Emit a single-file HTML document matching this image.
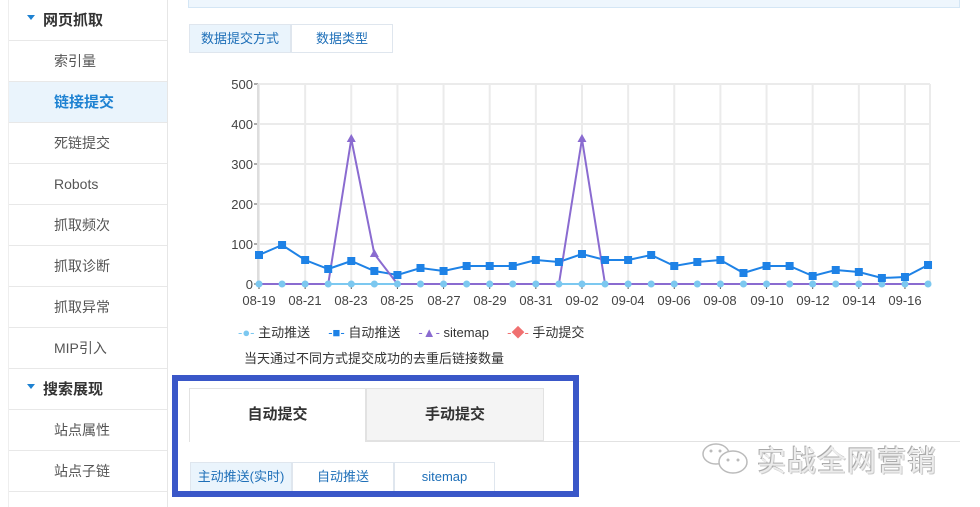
<!DOCTYPE html>
<html><head><meta charset="utf-8"><style>
*{margin:0;padding:0;box-sizing:border-box}
body{width:980px;height:507px;overflow:hidden;background:#fff;font-family:"Liberation Sans","Noto Sans CJK SC",sans-serif;position:relative;color:#333}
.side{position:absolute;left:8px;top:0;width:160px;height:507px;border-right:1px solid #e6e6e6;border-left:1px solid #eee}
.row{height:41px;border-bottom:1px solid #e8e8e8;font-size:14px;line-height:41px;padding-left:45px;color:#555}
.row.h{padding-left:18px;font-weight:bold;color:#333;font-size:15px}
.row.h:before{content:"";display:inline-block;border:4px solid transparent;border-top:5px solid #1e82d2;margin-right:8px;vertical-align:1px}
.row.a{background:#eaf4fc;color:#1e82d2;font-weight:bold;font-size:15px}
.abs{position:absolute}
.tab{position:absolute;font-size:13px;text-align:center;border:1px solid #dfe6ee;color:#1e6fb8}
</style></head><body>
<div class="side">
<div class="row h">网页抓取</div>
<div class="row">索引量</div>
<div class="row a">链接提交</div>
<div class="row">死链提交</div>
<div class="row">Robots</div>
<div class="row">抓取频次</div>
<div class="row">抓取诊断</div>
<div class="row">抓取异常</div>
<div class="row">MIP引入</div>
<div class="row h">搜索展现</div>
<div class="row">站点属性</div>
<div class="row">站点子链</div>
</div>
<div class="abs" style="left:188px;top:-1px;width:772px;height:9px;background:#eef6fd;border:1px solid #d4e6f5"></div>
<div class="tab" style="left:189px;top:24px;width:102px;height:29px;line-height:27px;background:#eaf4fc">数据提交方式</div>
<div class="tab" style="left:291px;top:24px;width:102px;height:29px;line-height:27px;background:#fff">数据类型</div>
<svg class="abs" style="left:0;top:0" width="980" height="507" id="c">
<g font-size="13" fill="#444" text-anchor="end" font-family="Liberation Sans,sans-serif">
<text x="253" y="89">500</text><text x="253" y="129">400</text><text x="253" y="169">300</text><text x="253" y="209">200</text><text x="253" y="249">100</text><text x="253" y="289">0</text>
</g>
<g font-size="13" fill="#444" text-anchor="middle" font-family="Liberation Sans,sans-serif" id="xl">
<text x="259" y="305">08-19</text><text x="305" y="305">08-21</text><text x="351" y="305">08-23</text><text x="397" y="305">08-25</text><text x="444" y="305">08-27</text><text x="490" y="305">08-29</text><text x="536" y="305">08-31</text><text x="582" y="305">09-02</text><text x="628" y="305">09-04</text><text x="674" y="305">09-06</text><text x="720" y="305">09-08</text><text x="767" y="305">09-10</text><text x="813" y="305">09-12</text><text x="859" y="305">09-14</text><text x="905" y="305">09-16</text>
</g>
</svg>
<div class="abs" style="left:238px;top:322px;font-size:13px;color:#333;white-space:nowrap">
<span style="color:#7cc8f0">-●-</span> 主动推送 &nbsp;&nbsp;&nbsp; <span style="color:#1e82e6">-■-</span> 自动推送 &nbsp;&nbsp;&nbsp; <span style="color:#8a6bd0">-▲-</span> sitemap &nbsp;&nbsp;&nbsp; <span style="color:#f07070">-◆-</span> 手动提交</div>
<div class="abs" style="left:244px;top:348px;font-size:13px;color:#333">当天通过不同方式提交成功的去重后链接数量</div>
<div class="abs" style="left:366px;top:441px;width:594px;height:1px;background:#e2e2e2"></div>
<div class="abs" style="left:189px;top:388px;width:177px;height:54px;background:#fff;border:1px solid #e2e2e2;border-bottom:none;font-size:15px;font-weight:bold;text-align:center;line-height:52px">自动提交</div>
<div class="abs" style="left:366px;top:388px;width:178px;height:53px;background:#f4f4f4;border:1px solid #e2e2e2;font-size:15px;font-weight:bold;text-align:center;line-height:52px">手动提交</div>
<div class="tab" style="left:190px;top:462px;width:102px;height:30px;line-height:28px;background:#eaf4fc">主动推送(实时)</div>
<div class="tab" style="left:292px;top:462px;width:102px;height:30px;line-height:28px">自动推送</div>
<div class="tab" style="left:394px;top:462px;width:101px;height:30px;line-height:28px">sitemap</div>
<div class="abs" style="left:172px;top:375px;width:407px;height:122px;border:6px solid #3a57c8"></div>
<svg class="abs" style="left:700px;top:440px" width="60" height="40"><g fill="none" stroke="#bbb" stroke-width="1.5"><ellipse cx="16" cy="14" rx="13" ry="10"/><ellipse cx="33" cy="22" rx="14" ry="11" fill="#fff"/></g><g fill="#bbb"><circle cx="11" cy="11" r="1.5"/><circle cx="20" cy="11" r="1.5"/><circle cx="28" cy="20" r="1.5"/><circle cx="38" cy="20" r="1.5"/></g></svg>
<div class="abs" style="left:757px;top:438px;font-size:29px;color:#ececec;text-shadow:-1px -1px 0 #aaa,1px 1px 0 #ccc;white-space:nowrap;letter-spacing:1px">实战全网营销</div>
<script>
var s=document.getElementById('c'),ns='http://www.w3.org/2000/svg';
function el(t,a){var e=document.createElementNS(ns,t);for(var k in a)e.setAttribute(k,a[k]);s.appendChild(e);return e}
var X=[];for(var i=0;i<30;i++)X.push(259+23.07*i);
for(var v=0;v<6;v++){var y=84+v*40;el('line',{x1:258,x2:930,y1:y,y2:y,stroke:'#ebebeb','stroke-width':2});el('line',{x1:254,x2:258,y1:y,y2:y,stroke:'#555'})}
for(var i=0;i<30;i+=2){el('line',{x1:X[i],x2:X[i],y1:84,y2:284,stroke:'#ebebeb','stroke-width':2});el('line',{x1:X[i],x2:X[i],y1:284,y2:289,stroke:'#555'})}
el('line',{x1:930,x2:930,y1:84,y2:284,stroke:'#ebebeb','stroke-width':2});
el('line',{x1:258,x2:258,y1:84,y2:284,stroke:'#ddd','stroke-width':2});
var A=[255,245,260,269,261,271,275,268,271,266,266,266,260,262,254,260,260,255,266,262,260,273,266,266,276,270,272,278,277,265];
var S=[];for(i=0;i<30;i++)S.push(284);S[4]=139;S[5]=254;S[14]=139;
function pl(Y,c){var p=Y.map(function(y,i){return X[i]+','+y}).join(' ');el('polyline',{points:p,fill:'none',stroke:c,'stroke-width':2})}
pl(S.map(function(){return 284}),'#7cc8f0');
pl(A,'#1e82e6');
pl(S,'#8a6bd0');
for(i=0;i<30;i++){el('circle',{cx:X[i],cy:284,r:3.5,fill:'#7cc8f0'});el('rect',{x:X[i]-4,y:A[i]-4,width:8,height:8,fill:'#1e82e6'})}
[4,5,14].forEach(function(i){el('path',{d:'M'+X[i]+' '+(S[i]-5)+'l4.5 8h-9z',fill:'#8a6bd0'})});
</script>
</body></html>
